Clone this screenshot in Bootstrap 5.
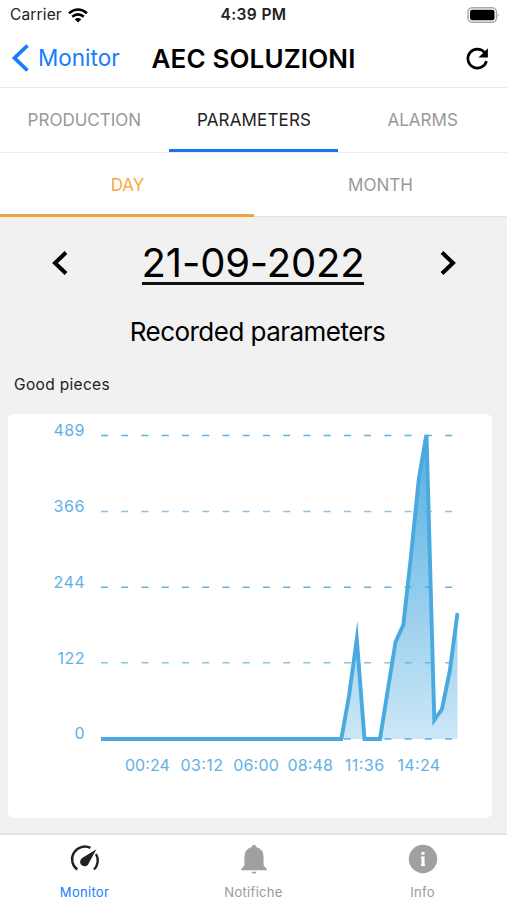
<!DOCTYPE html>
<html lang="en">
<head>
<meta charset="utf-8">
<meta name="viewport" content="width=device-width, initial-scale=1">
<title>AEC SOLUZIONI</title>
<link href="https://cdn.jsdelivr.net/npm/bootstrap@5.3.0/dist/css/bootstrap.min.css" rel="stylesheet">
<style>
  body { font-family: Inter, "Liberation Sans", sans-serif; color: #000; background: #f1f1f1; line-height: 1; }
  svg { display: block; flex: none; }
  a, a:hover { text-decoration: none; color: inherit; }
  .screen { height: 900px; overflow: hidden; }
  .status { height: 30px; font-size: 15.5px; padding: 0 8px 0 10px; color: #222; }
  .status .carrier { letter-spacing: .15px; margin-right: 6px; }
  .status .clock { font-size: 15.5px; letter-spacing: .4px; margin-right: 2px; }
  .titlebar { height: 58px; padding: 0 17px; border-bottom: 1px solid #e9e9e9; }
  .titlebar .back { color: #157efb; font-size: 22.5px; gap: 9px; margin-left: -6px; }
  .titlebar .back span { padding-top: 1px; }
  .titlebar h1 { font-size: 26px; font-weight: 600; line-height: 1; letter-spacing: .15px; }
  .tabs a { flex: 1 1 0; font-size: 17px; color: #999; border-bottom: 3px solid transparent; padding-top: 3px; }
  .tabs-main { height: 65px; border-bottom: 1px solid #ececf0; }
  .tabs-main a.active { color: #222; border-color: #1a73e8; letter-spacing: .15px; padding-left: 1px; }
  .tabs-range { height: 64px; border-bottom: 1px solid #e2e2e2; }
  .tabs-range a { margin-bottom: -1px; }
  .tabs-range a.active { color: #f5ab3c; border-color: #f0a63c; padding-left: 1px; }
  .datebar { height: 92px; padding: 0 50px 0 51px; }
  .date { font-size: 40px; border-bottom: 3px solid #111; line-height: 39px; letter-spacing: -.18px; padding-top: 1px; margin-right: 2px; }
  .section-title { font-size: 26px; font-weight: 400; line-height: 46px; height: 46px; letter-spacing: -.53px; padding-left: 8px; }
  .series { font-size: 15.5px; color: #222; height: 59px; padding: 22px 0 0 14px; letter-spacing: .33px; }
  .chart { margin: 0 15px 0 8px; height: 404px; border-radius: 6px; background: #fff; }
  .chart text { font-size: 16px; fill: #62b1e4; }
  .tabbar { height: 67px; border-top: 2px solid #e4e4e4; font-size: 13px; color: #9a9a9c; }
  .tabbar a { flex: 1 1 0; padding-top: 8px; gap: 11px; letter-spacing: .3px; }
  .tabbar a.active { color: #157efb; }
</style>
</head>
<body>
<div class="screen d-flex flex-column">
  <header class="bg-white">
    <div class="status d-flex align-items-center">
      <div class="col d-flex align-items-center">
        <span class="carrier">Carrier</span>
        <svg width="20" height="15" viewBox="0 0 20 15" fill="none" stroke="#000" stroke-width="2.6"><path d="M1 5.3Q10-2.3 19 5.3M4.2 8.8Q10 3.8 15.8 8.8"/><path d="M6.7 11.2Q10 8.6 13.3 11.2L10 14.6Z" fill="#000" stroke="none"/></svg>
      </div>
      <span class="clock fw-semibold">4:39 PM</span>
      <div class="col d-flex justify-content-end">
        <svg width="33" height="17" viewBox="0 0 33 17"><rect x="2" y=".1" width="28.5" height="14.6" rx="4.5" fill="#fff" stroke="#aaa" stroke-width="1.5" transform="translate(0 .6)"/><rect x="4" y="2.8" width="24.5" height="10.4" rx="2.2"/><path d="M31.8 5.9q1.6 2.2 0 4.4z" fill="#aaa"/></svg>
      </div>
    </div>
    <nav class="titlebar d-flex align-items-center">
      <div class="col"><a href="#" class="back d-inline-flex align-items-center"><svg width="18" height="28" viewBox="0 0 18 28" fill="none" stroke="#157efb" stroke-width="3.8"><path d="M16.5 1.5L3.5 14L16.5 26.5"/></svg><span>Monitor</span></a></div>
      <h1 class="m-0">AEC SOLUZIONI</h1>
      <div class="col d-flex justify-content-end"><svg width="25" height="24" viewBox="0 0 25 24"><path d="M19.7 5.5A9.5 9.5 0 1 0 21.5 14.2" fill="none" stroke="#000" stroke-width="2.7"/><path d="M22.9 1.2V10.6H13.5Z"/></svg></div>
    </nav>
    <nav class="tabs tabs-main d-flex">
      <a href="#" class="d-flex align-items-center justify-content-center">PRODUCTION</a>
      <a href="#" class="active d-flex align-items-center justify-content-center">PARAMETERS</a>
      <a href="#" class="d-flex align-items-center justify-content-center">ALARMS</a>
    </nav>
    <nav class="tabs tabs-range d-flex">
      <a href="#" class="active d-flex align-items-center justify-content-center">DAY</a>
      <a href="#" class="d-flex align-items-center justify-content-center">MONTH</a>
    </nav>
  </header>
  <main class="flex-grow-1">
    <div class="datebar d-flex align-items-center justify-content-between">
      <svg width="18" height="26" viewBox="0 0 18 26" fill="none" stroke="#000" stroke-width="4"><path d="M15 2.5L4 13L15 23.5"/></svg>
      <span class="date">21-09-2022</span>
      <svg width="18" height="26" viewBox="0 0 18 26" fill="none" stroke="#000" stroke-width="4"><path d="M3 2.5L14 13L3 23.5"/></svg>
    </div>
    <h2 class="section-title text-center m-0">Recorded parameters</h2>
    <div class="series">Good pieces</div>
    <section class="chart">
      <svg width="484" height="404" viewBox="8 414 484 404">
        <defs>
          <linearGradient id="area" x1="0" y1="435" x2="0" y2="739" gradientUnits="userSpaceOnUse"><stop offset="0" stop-color="#4aaae0" stop-opacity=".95"/><stop offset="1" stop-color="#4aaae0" stop-opacity=".28"/></linearGradient>
          <clipPath id="plot"><rect x="101" y="434.7" width="358" height="310"/></clipPath>
        </defs>
        <g stroke="#62b1e0" stroke-width="1.5" stroke-dasharray="7 13.24">
          <path d="M101 435.5H455M101 587.3H455M101 739H455"/><path d="M101 511.5H455M101 662.8H455" opacity=".75"/>
        </g>
        <g clip-path="url(#plot)">
          <path fill="url(#area)" d="M341.3 739L349 696L356.8 640L364.5 739H380L387.8 690L395.5 642L403.3 625L411 556L418.8 479L426.5 436L434.3 720L442 709L449.8 671L457.5 613V739Z"/>
          <path fill="none" stroke="#4aaae0" stroke-width="3.9" stroke-miterlimit="12" d="M101 739H341.3L349 696L356.8 639L364.5 739H380L387.8 690L395.5 642L403.3 625L411 556L418.8 479L426.5 434L434.3 720L442 709L449.8 671L457.5 613"/>
        </g>
        <g text-anchor="end">
          <text x="84.5" y="436" textLength="31">489</text><text x="84.5" y="512" textLength="31">366</text><text x="84.5" y="587.5" textLength="31">244</text><text x="84.5" y="663.5" textLength="27">122</text><text x="84.5" y="739">0</text>
        </g>
        <g text-anchor="middle">
          <text x="147.4" y="771.3" textLength="45">00:24</text><text x="201.8" y="771.3" textLength="42.5">03:12</text><text x="256" y="771.3" textLength="45.5">06:00</text><text x="310.2" y="771.3" textLength="45.5">08:48</text><text x="364.4" y="771.3" textLength="39.5">11:36</text><text x="418.8" y="771.3" textLength="42.5">14:24</text>
        </g>
      </svg>
    </section>
  </main>
  <nav class="tabbar bg-white d-flex">
    <a href="#" class="active d-flex flex-column align-items-center">
      <svg width="32" height="32" viewBox="0 0 32 32" fill="none" stroke="#222" stroke-width="2.4"><path d="M8.3 26.5A12.7 12.7 0 0 1 21.5 4.9M27 11A12.7 12.7 0 0 1 25 26.5"/><path d="M27.4 6.2L20 19.8A4.5 4.5 0 1 1 13.6 14.8Z" fill="#222" stroke="none"/></svg>
      <span>Monitor</span>
    </a>
    <a href="#" class="d-flex flex-column align-items-center">
      <svg width="32" height="32" viewBox="0 0 32 32" fill="#a0a0a2"><path d="M16 1.8Q17.7 1.8 18.3 3.9Q25.6 6 25.6 14V22.5L28.8 26V27.2H3.2V26L6.4 22.5V14Q6.4 6 13.7 3.9Q14.3 1.8 16 1.8ZM13.3 28.7H18.7Q18.2 30.7 16 30.7T13.3 28.7Z"/></svg>
      <span>Notifiche</span>
    </a>
    <a href="#" class="d-flex flex-column align-items-center">
      <svg width="32" height="32" viewBox="0 0 32 32"><circle cx="16" cy="16" r="14.2" fill="#a0a0a2"/><path d="M14.4 9h3.2v2.8h-3.2zM13.9 13.6h3.7v7.9h.5v1.6h-4.2v-1.6h.6v-6.3h-.6z" fill="#fff"/></svg>
      <span>Info</span>
    </a>
  </nav>
</div>
<script src="https://cdn.jsdelivr.net/npm/bootstrap@5.3.0/dist/js/bootstrap.bundle.min.js"></script>
</body>
</html>
